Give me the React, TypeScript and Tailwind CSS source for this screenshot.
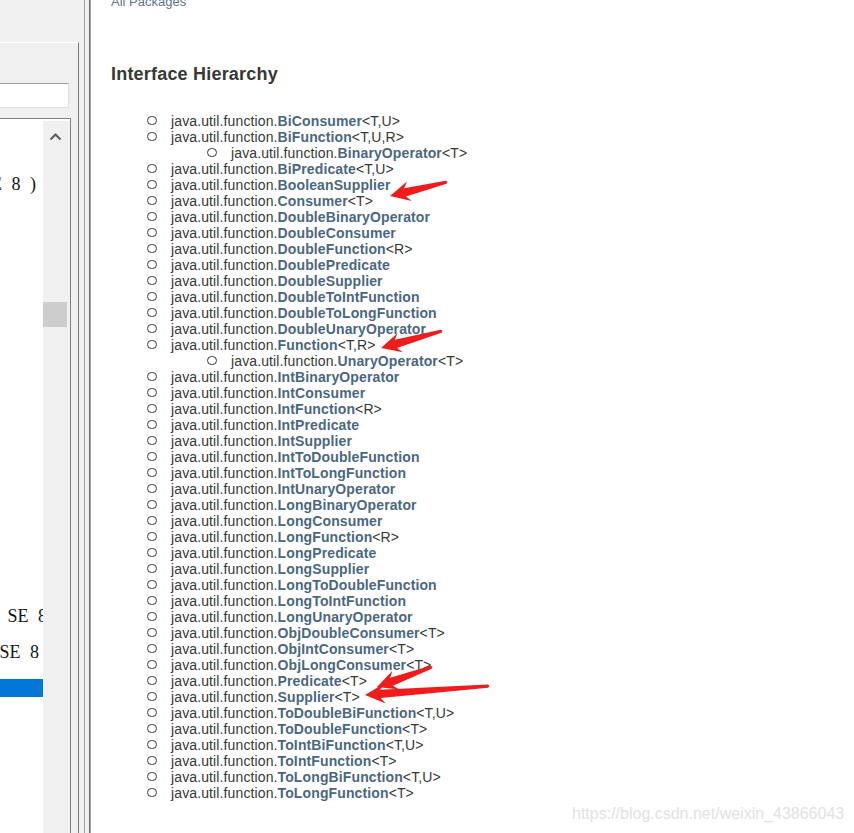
import React from "react";

type Item = { name: string; gen?: string; nested?: boolean };

const items: Item[] = [
  { name: "BiConsumer", gen: "<T,U>" },
  { name: "BiFunction", gen: "<T,U,R>" },
  { name: "BinaryOperator", gen: "<T>", nested: true },
  { name: "BiPredicate", gen: "<T,U>" },
  { name: "BooleanSupplier" },
  { name: "Consumer", gen: "<T>" },
  { name: "DoubleBinaryOperator" },
  { name: "DoubleConsumer" },
  { name: "DoubleFunction", gen: "<R>" },
  { name: "DoublePredicate" },
  { name: "DoubleSupplier" },
  { name: "DoubleToIntFunction" },
  { name: "DoubleToLongFunction" },
  { name: "DoubleUnaryOperator" },
  { name: "Function", gen: "<T,R>" },
  { name: "UnaryOperator", gen: "<T>", nested: true },
  { name: "IntBinaryOperator" },
  { name: "IntConsumer" },
  { name: "IntFunction", gen: "<R>" },
  { name: "IntPredicate" },
  { name: "IntSupplier" },
  { name: "IntToDoubleFunction" },
  { name: "IntToLongFunction" },
  { name: "IntUnaryOperator" },
  { name: "LongBinaryOperator" },
  { name: "LongConsumer" },
  { name: "LongFunction", gen: "<R>" },
  { name: "LongPredicate" },
  { name: "LongSupplier" },
  { name: "LongToDoubleFunction" },
  { name: "LongToIntFunction" },
  { name: "LongUnaryOperator" },
  { name: "ObjDoubleConsumer", gen: "<T>" },
  { name: "ObjIntConsumer", gen: "<T>" },
  { name: "ObjLongConsumer", gen: "<T>" },
  { name: "Predicate", gen: "<T>" },
  { name: "Supplier", gen: "<T>" },
  { name: "ToDoubleBiFunction", gen: "<T,U>" },
  { name: "ToDoubleFunction", gen: "<T>" },
  { name: "ToIntBiFunction", gen: "<T,U>" },
  { name: "ToIntFunction", gen: "<T>" },
  { name: "ToLongBiFunction", gen: "<T,U>" },
  { name: "ToLongFunction", gen: "<T>" },
];

function arrowPoints(tip: [number, number], tail: [number, number]) {
  const dx = tail[0] - tip[0];
  const dy = tail[1] - tip[1];
  const L = Math.hypot(dx, dy);
  const ux = dx / L;
  const uy = dy / L;
  const px = -uy;
  const py = ux;
  const pts: [number, number][] = [
    [0, 0],
    [20, 10],
    [15.5, 4.2],
    [L - 1, 1.6],
    [L + 0.6, 0],
    [L - 1, -1.6],
    [15.5, -4.2],
    [20, -10],
  ];
  return pts
    .map(([a, b]) => `${(tip[0] + ux * a + px * b).toFixed(2)},${(tip[1] + uy * a + py * b).toFixed(2)}`)
    .join(" ");
}

const arrows: [[number, number], [number, number]][] = [
  [[390, 196], [447, 182]],
  [[381, 348], [442, 331]],
  [[377, 687], [432, 667]],
  [[365, 695], [489, 686]],
];

type ListRow = { text?: string; w?: number; sel?: boolean };
const listRows: ListRow[] = Array.from({ length: 40 }, () => ({}));
listRows[3] = { text: "(Java SE 8 )", w: 36 };
listRows[27] = { text: "Java SE 8", w: 47 };
listRows[29] = { text: "Java SE 8", w: 39 };
listRows[31] = { sel: true };

export default function App() {
  return (
    <div className="relative flex h-[833px] w-[854px] overflow-hidden bg-white">
      {/* Left pane */}
      <div className="flex w-[85px] shrink-0 flex-col border-r border-[#a0a0a0] bg-[#f0f0f0]">
        <div className="h-[42px] shrink-0" />
        <div className="flex w-[79px] flex-1 flex-col border-t border-r border-t-white border-r-[#7a7a7a] pt-[40px]">
          <div className="h-[25px] w-[69px] shrink-0 border-t border-r border-b border-t-[#a0a0a0] border-r-[#dedede] border-b-[#dedede] bg-white" />
          <div className="mt-[10px] flex w-[71px] flex-1 border-t border-r border-[#828282] bg-white pt-[2px]">
            <div className="w-[43px] shrink-0 overflow-hidden bg-white font-['Liberation_Serif',serif] text-[18px] leading-[18px] text-[#141414] [word-spacing:5px]">
              {listRows.map((r, i) => (
                <div
                  key={i}
                  className={`flex h-[18px] justify-end whitespace-nowrap ${r.sel ? "w-[43px] bg-[#0078d7]" : ""}`}
                  style={r.w ? { width: r.w } : undefined}
                >
                  {r.text ?? ""}
                </div>
              ))}
            </div>
            <div className="flex w-[27px] shrink-0 flex-col bg-[#f0f0f0]">
              <div className="flex h-[181px] w-[24px] shrink-0 justify-center pt-[11px]">
                <svg width="13" height="9" viewBox="0 0 13 9">
                  <polyline points="1.5,7.5 6.5,2.5 11.5,7.5" fill="none" stroke="#606060" strokeWidth="2.2" />
                </svg>
              </div>
              <div className="h-[25px] w-[24px] bg-[#cdcdcd]" />
            </div>
          </div>
        </div>
      </div>
      <div className="w-[4px] shrink-0 bg-[#f0f0f0]" />
      <div className="w-[1px] shrink-0 bg-[#6e6e6e]" />
      <div className="w-[1px] shrink-0 bg-[#a8a8a8]" />

      {/* Content */}
      <div className="flex-1 overflow-hidden bg-white pl-[20px] font-['Liberation_Sans',Arial,sans-serif] text-[#353833]">
        <div className="mt-[-6px] text-[13px] leading-[16px] text-[#5a7590]">All Packages</div>
        <h2 className="mt-[55px] text-[18px] leading-[18px] font-bold tracking-[0.2px] text-[#353833]">
          Interface Hierarchy
        </h2>
        <div className="mt-[30px] text-[14px] leading-[16px] tracking-[0.12px]">
          {items.map((it) => (
            <div
              key={it.name}
              className={`flex h-[16px] items-start whitespace-nowrap ${it.nested ? "pl-[96px]" : "pl-[36px]"}`}
            >
              <span className="mt-[3px] h-[9px] w-[10px] shrink-0 rounded-full border-[1.8px] border-[#353833]" />
              <span className="ml-[14px]">
                java.util.function.
                <span className="font-bold text-[#4a6782]">{it.name}</span>
                {it.gen ?? ""}
              </span>
            </div>
          ))}
        </div>
      </div>

      {/* Annotation arrows overlay */}
      <svg className="pointer-events-none absolute left-0 top-0" width="854" height="833">
        {arrows.map(([tip, tail], i) => (
          <polygon key={i} points={arrowPoints(tip, tail)} fill="#f01c1c" />
        ))}
      </svg>

      {/* Watermark */}
      <div className="pointer-events-none absolute left-[572px] top-[804px] font-['Liberation_Sans',Arial,sans-serif] text-[16px] leading-[20px] text-[#e2e2e2]">
        https://blog.csdn.net/weixin_43866043
      </div>
    </div>
  );
}
